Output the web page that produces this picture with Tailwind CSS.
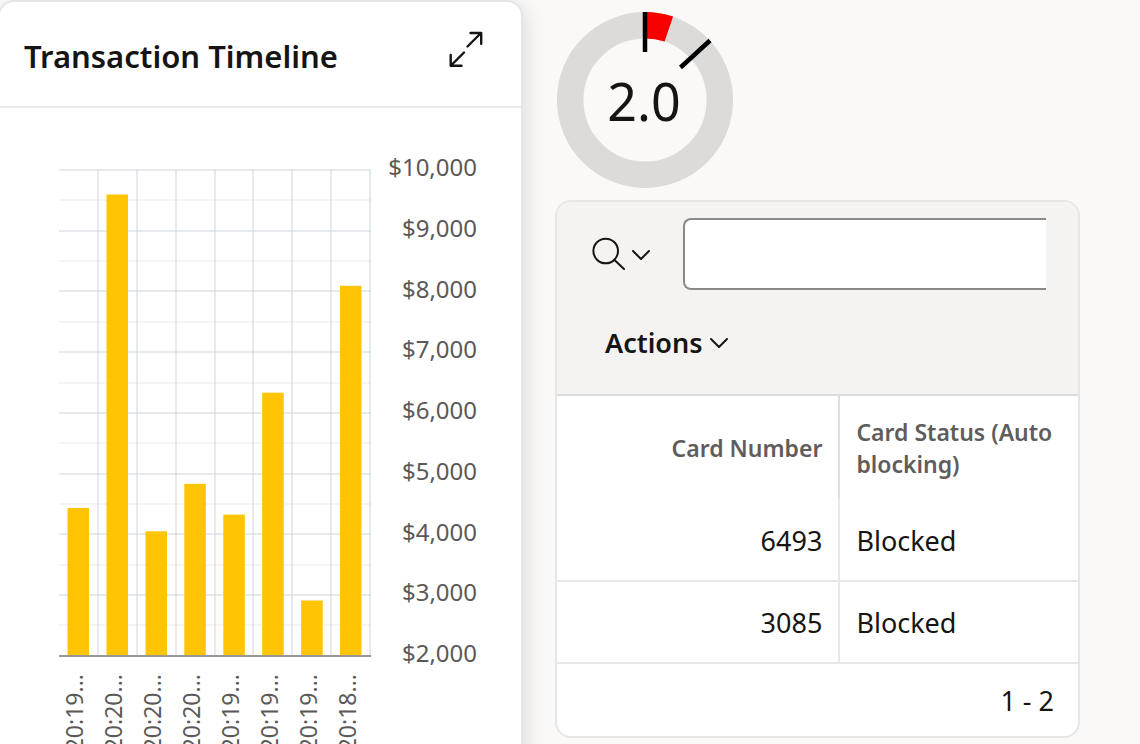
<!DOCTYPE html>
<html lang="en">
<head>
<meta charset="utf-8">
<meta name="viewport" content="width=device-width, initial-scale=1">
<title>Transaction Timeline</title>
<script src="https://cdn.jsdelivr.net/npm/@tailwindcss/browser@4"></script>
</head>
<body class="bg-[#faf9f8] font-['Noto_Sans','Open_Sans',sans-serif] text-[#161513]">
<main class="grid h-screen grid-cols-[523fr_525fr] gap-8 overflow-hidden pr-[60px]">

  <section class="-ml-0.5 h-[820px] min-w-0 rounded-2xl border-2 border-[#e6e6e6] bg-white shadow-[4px_4px_20px_rgba(0,0,0,0.1)]">
    <header class="flex h-[106px] items-center justify-between border-b-2 border-[#ececeb] pt-1 pr-9 pl-6">
      <h1 class="text-[31px] leading-10 font-semibold">Transaction Timeline</h1>
      <button type="button" aria-label="Maximize" class="pb-3">
        <svg class="block" width="38" height="40" viewBox="0 0 38 40" fill="none" stroke="#161513" stroke-width="2.4" stroke-linecap="round" stroke-linejoin="round">
          <path d="M20.500 16.500 34 3M23.500 3h10.700v10.700M17 22.500 4 35.500M3.700 25v10.700H14.500"/>
        </svg>
      </button>
    </header>
    <div class="pt-[46px] pr-11 pl-[43px]">
      <div class="flex justify-between pl-4">
        <div class="w-[312px]">
          <svg class="mt-[15px] block" width="312" height="488" viewBox="0 0 312 488" role="img" aria-label="Transaction amounts by time">
            <path d="M0 31h312M0 92h312M0 153h312M0 214h312M0 274h312M0 335h312M0 396h312M0 456h312" stroke="#f4f4f5" stroke-width="2"/>
            <g stroke="#c4ced7" stroke-opacity=".42" stroke-width="2">
              <path d="M0 1h312M0 62h312M0 122h312M0 183h312M0 244h312M0 305h312M0 365h312M0 426h312"/>
              <path d="M39 1v486M78 1v486M117 1v486M156 1v486M194 1v486M233 1v486M272 1v486M311 1v486"/>
            </g>
            <g fill="#ffc404">
              <rect x="8.500" y="339" width="21.500" height="147"/>
              <rect x="47.500" y="25.500" width="21.500" height="461"/>
              <rect x="86.500" y="362.300" width="21.500" height="124"/>
              <rect x="125.300" y="314.800" width="21.500" height="172"/>
              <rect x="164.300" y="345.600" width="21.500" height="141"/>
              <rect x="203.200" y="223.700" width="21.500" height="263"/>
              <rect x="242.200" y="431.500" width="21.500" height="55"/>
              <rect x="281" y="116.800" width="21.500" height="370"/>
            </g>
            <path d="M0 487h312" stroke="#979797" stroke-width="2"/>
          </svg>
          <div class="mt-[17px] mr-1 -ml-1 grid grid-cols-8 justify-items-center text-[23px] leading-[39px] text-[#5b5957]">
            <span class="rotate-180 [writing-mode:vertical-rl]">20:20:19...</span>
            <span class="rotate-180 [writing-mode:vertical-rl]">20:20:20...</span>
            <span class="rotate-180 [writing-mode:vertical-rl]">20:20:20...</span>
            <span class="rotate-180 [writing-mode:vertical-rl]">20:20:20...</span>
            <span class="rotate-180 [writing-mode:vertical-rl]">20:20:19...</span>
            <span class="rotate-180 [writing-mode:vertical-rl]">20:20:19...</span>
            <span class="rotate-180 [writing-mode:vertical-rl]">20:20:19...</span>
            <span class="rotate-180 [writing-mode:vertical-rl]">20:20:18...</span>
          </div>
        </div>
        <div class="flex h-[512px] flex-col justify-between text-right text-2xl leading-[26px] text-[#5b5957]">
          <span>$10,000</span><span>$9,000</span><span>$8,000</span><span>$7,000</span><span>$6,000</span><span>$5,000</span><span>$4,000</span><span>$3,000</span><span>$2,000</span>
        </div>
      </div>
    </div>
  </section>

  <section class="min-w-0 pt-3">
    <svg class="ml-px block" width="178" height="176" viewBox="0 0 178 176" role="img" aria-label="2.0">
      <circle cx="89" cy="88" r="74.800" fill="none" stroke="#dcdbda" stroke-width="26.500"/>
      <path d="M89 0A88 88 0 0 1 117.100 4.600L108.600 29.600A61.500 61.500 0 0 0 89 26.500Z" fill="#f80000"/>
      <path d="M89 0v40M154 28.500 124.500 55.500" stroke="#000" stroke-width="4.500"/>
      <text x="88" y="109" text-anchor="middle" font-size="52" fill="#161513">2.0</text>
    </svg>

    <div class="mt-3 overflow-hidden rounded-2xl border-2 border-[#e6e6e6] bg-white">
      <div class="border-b-2 border-[#dddcdb] bg-[#f4f3f2] px-8 pt-4 pb-7">
        <div class="flex items-center">
          <button type="button" aria-label="Select columns to search" class="flex h-[72px] w-[94px] items-center pl-[3px]">
            <svg class="block" width="60" height="36" viewBox="0 0 60 36" fill="none" stroke="#161513" stroke-width="2" stroke-linecap="round" stroke-linejoin="round">
              <circle cx="13.700" cy="15" r="12.300"/><path d="m22.500 24 9.500 9M41 15l8 8 8-8"/>
            </svg>
          </button>
          <input type="text" aria-label="Search" class="h-[72px] min-w-0 flex-1 rounded-l-lg border-2 border-r-0 border-[#8b8987] bg-white px-4 text-[27px] outline-none">
        </div>
        <button type="button" class="mt-[31px] mb-px flex h-11 items-center gap-1.5 pl-4 text-[27px] font-semibold">
          Actions
          <svg class="block" width="20" height="12" viewBox="0 0 20 12" fill="none" stroke="#161513" stroke-width="2" stroke-linecap="round" stroke-linejoin="round"><path d="m2 2 8 8 8-8"/></svg>
        </button>
      </div>
      <table class="w-full table-fixed border-collapse">
        <colgroup><col class="w-[54.2%]"><col></colgroup>
        <thead>
          <tr class="h-[103px] text-[23px] leading-8 text-[#5f5d5b]">
            <th scope="col" class="border-r-2 border-[#dfdedd] px-4 text-right font-semibold">Card Number</th>
            <th scope="col" class="px-4 text-left font-semibold">Card Status (Auto blocking)</th>
          </tr>
        </thead>
        <tbody class="text-[27px] leading-10">
          <tr class="h-[82px] border-b-2 border-[#e8e8e8]">
            <td class="border-r-2 border-[#e8e8e8] px-4 pt-0.5 text-right">6493</td>
            <td class="px-4 pt-0.5">Blocked</td>
          </tr>
          <tr class="h-[82px] border-b-2 border-[#e8e8e8]">
            <td class="border-r-2 border-[#e8e8e8] px-4 pt-0.5 text-right">3085</td>
            <td class="px-4 pt-0.5">Blocked</td>
          </tr>
        </tbody>
      </table>
      <footer class="flex h-[72px] items-center justify-end px-6 pt-0.5 text-[27px]">1 - 2</footer>
    </div>
  </section>
</main>
</body>
</html>
